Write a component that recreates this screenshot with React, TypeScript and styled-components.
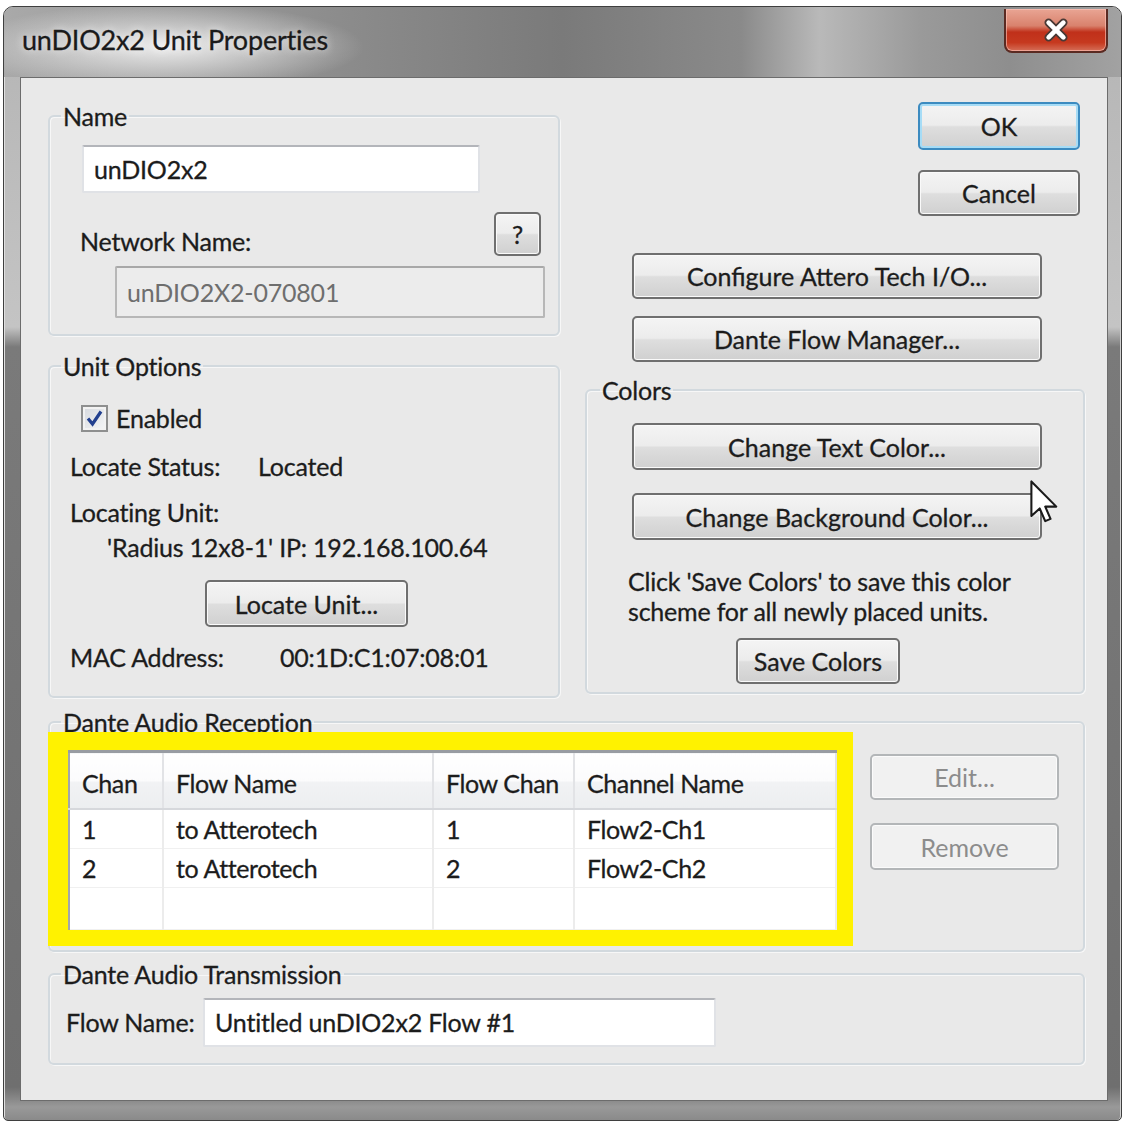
import React from 'react';
import styled, { createGlobalStyle } from 'styled-components';

const GlobalStyle = createGlobalStyle`
  html, body {
    margin: 0;
    padding: 0;
    background: #ffffff;
  }
  body {
    font-family: Lato, 'Open Sans', sans-serif;
    color: #1c1c1c;
    -webkit-text-stroke: 0.3px currentColor;
  }
`;

const Page = styled.div`
  padding: 6px 4px 6px 3px;
`;

const Window = styled.div`
  position: relative;
  width: 1119px;
  box-sizing: border-box;
  border: 1px solid #3f3f3f;
  border-radius: 10px 10px 5px 5px;
  padding-bottom: 19px;
  background: linear-gradient(
    180deg,
    #b4b4b4 0px,
    #c4c4c4 320px,
    #7a7a7a 340px,
    #6f6f6f 1080px,
    #999999 1100px,
    #8a8a8a 100%
  );
  box-shadow: inset 1px 1px 0 #e0e0e0, inset -1px 0 0 #d0d0d0;
  overflow: hidden;
`;

const TitleBar = styled.div`
  height: 70px;
  display: flex;
  align-items: center;
  justify-content: space-between;
  padding-left: 18px;
  background:
    radial-gradient(ellipse 200px 44px at 160px 40px, rgba(240, 240, 240, 0.95), rgba(240, 240, 240, 0) 100%),
    linear-gradient(
      90deg,
      #a9a9a9 0%,
      #8c8c8c 30%,
      #7a7a7a 50%,
      #8a8a8a 66%,
      #b9b9b9 73%,
      #9a9a9a 82%,
      #8e8e8e 90%,
      #a2a2a2 100%
    );
`;

const Title = styled.div`
  font-size: 27px;
  letter-spacing: -0.2px;
  color: #1a1a1a;
  margin-top: -6px;
  text-shadow: 0 0 8px rgba(255, 255, 255, 0.9);
`;

const CloseButton = styled.div`
  align-self: flex-start;
  width: 104px;
  height: 44px;
  margin: 2px 13px 0 0;
  display: flex;
  align-items: center;
  justify-content: center;
  box-sizing: border-box;
  border: 2px solid #5a2a22;
  border-top: none;
  border-radius: 0 0 8px 8px;
  background: linear-gradient(180deg, #e9a594 0%, #d9826d 40%, #c0301a 55%, #c6391f 80%, #d56f58 100%);
  box-shadow: inset 0 0 0 1px rgba(255, 200, 190, 0.6);
`;

const Client = styled.div`
  margin: 0 13px 0 16px;
  border: 1px solid #6c6c6c;
  background: #e9e9e9;
  padding: 24px 22px 35px 27px;
  position: relative;
`;

const TopSection = styled.div`
  display: flex;
  gap: 25px;
  align-items: flex-start;
`;

const Column = styled.div<{ $w: number }>`
  width: ${(p) => p.$w}px;
  display: flex;
  flex-direction: column;
`;

const Group = styled.fieldset<{ $pb: number; $mt?: number }>`
  margin: ${(p) => p.$mt ?? 0}px 0 0 0;
  padding: 0 0 ${(p) => p.$pb}px 0;
  border: 2px solid #d2d9de;
  border-radius: 6px;
  box-shadow: inset 1px 1px 0 #f7f7f7, 1px 1px 0 #f7f7f7;
  min-width: 0;
  display: flex;
  flex-direction: column;
  align-items: flex-start;
`;

const Legend = styled.legend<{ $ml?: number }>`
  margin-left: ${(p) => p.$ml ?? 11}px;
  padding: 0 2px;
  font-size: 25px;
  line-height: 28px;
  letter-spacing: -0.2px;
  color: #1c1c1c;
`;

const Text = styled.div<{ $ml?: number; $mt?: number; $w?: number }>`
  margin: ${(p) => p.$mt ?? 0}px 0 0 ${(p) => p.$ml ?? 0}px;
  font-size: 25px;
  line-height: 28px;
  letter-spacing: -0.2px;
  white-space: nowrap;
  color: #1c1c1c;
  ${(p) => (p.$w ? `width: ${p.$w}px;` : '')}
`;

const Row = styled.div<{ $ml?: number; $mt?: number }>`
  display: flex;
  align-items: center;
  margin: ${(p) => p.$mt ?? 0}px 0 0 ${(p) => p.$ml ?? 0}px;
`;

const Button = styled.button<{
  $w: number;
  $h?: number;
  $ml?: number;
  $mt?: number;
  $variant?: 'default' | 'disabled';
}>`
  width: ${(p) => p.$w}px;
  height: ${(p) => p.$h ?? 46}px;
  margin: ${(p) => p.$mt ?? 0}px 0 0 ${(p) => p.$ml ?? 0}px;
  padding: 0;
  flex-shrink: 0;
  box-sizing: border-box;
  border-radius: 5px;
  font-family: inherit;
  font-size: 25px;
  letter-spacing: 0px;
  -webkit-text-stroke: ${(p) => (p.$variant === 'disabled' ? '0px' : '0.3px')} currentColor;
  color: ${(p) => (p.$variant === 'disabled' ? '#8c8c8c' : '#1c1c1c')};
  border: 2px solid
    ${(p) => (p.$variant === 'default' ? '#3c8bc0' : p.$variant === 'disabled' ? '#b3b6b8' : '#6f6f6f')};
  background: ${(p) =>
    p.$variant === 'disabled'
      ? '#f1f1f1'
      : 'linear-gradient(180deg, #f4f4f4 0%, #ececec 48%, #dedede 52%, #d0d0d0 100%)'};
  box-shadow: ${(p) =>
    p.$variant === 'default'
      ? 'inset 0 0 0 2px #a6dcf6'
      : p.$variant === 'disabled'
      ? 'inset 0 0 0 1px #fbfbfb'
      : 'inset 0 0 0 1px #fafafa'};
`;

const TextBox = styled.input<{ $w: number; $h: number; $ml?: number; $mt?: number; $disabled?: boolean }>`
  width: ${(p) => p.$w}px;
  height: ${(p) => p.$h}px;
  margin: ${(p) => p.$mt ?? 0}px 0 0 ${(p) => p.$ml ?? 0}px;
  box-sizing: border-box;
  padding: 0 0 0 10px;
  font-family: inherit;
  font-size: 25px;
  letter-spacing: -0.2px;
  outline: none;
  -webkit-text-stroke: ${(p) => (p.$disabled ? '0px' : '0.3px')} currentColor;
  color: ${(p) => (p.$disabled ? '#6e6e6e' : '#1c1c1c')};
  background: ${(p) => (p.$disabled ? '#ececec' : '#ffffff')};
  border: 2px solid ${(p) => (p.$disabled ? '#b7b7b7' : '#e0e2e6')};
  border-top-color: ${(p) => (p.$disabled ? '#a8a8a8' : '#b3b5ba')};
  border-radius: 2px;
`;

const CheckBox = styled.div`
  width: 27px;
  height: 27px;
  box-sizing: border-box;
  border: 2px solid #8e8f8f;
  background: linear-gradient(135deg, #d6d9de 0%, #f5f6f7 100%);
  box-shadow: inset 0 0 0 2px #f2f2f2;
  display: flex;
  align-items: center;
  justify-content: center;
  margin-right: 8px;
`;

const ButtonStack = styled.div<{ $mt: number; $gap: number; $ml: number }>`
  display: flex;
  flex-direction: column;
  gap: ${(p) => p.$gap}px;
  margin: ${(p) => p.$mt}px 0 0 ${(p) => p.$ml}px;
`;

const ReceptionBody = styled.div`
  display: flex;
  align-items: flex-start;
  margin: -4px 0 0 -2px;
`;

const Highlight = styled.div`
  border-style: solid;
  border-color: #fff200;
  border-width: 18px 16px 16px 20px;
`;

const ListView = styled.table`
  width: 767px;
  border-collapse: collapse;
  table-layout: fixed;
  background: #ffffff;
  border-top: 3px solid #989ca2;
  border-left: 2px solid #a2a6ab;
`;

const HeadCell = styled.th<{ $w: number }>`
  width: ${(p) => p.$w}px;
  height: 57px;
  padding: 5px 0 0 12px;
  text-align: left;
  font-weight: normal;
  font-size: 25px;
  letter-spacing: -0.4px;
  color: #1c1c1c;
  background: linear-gradient(180deg, #ffffff 0%, #fbfbfc 50%, #f1f2f4 52%, #eceef0 100%);
  border-right: 2px solid #e2e3e6;
  border-bottom: 2px solid #d6d8dc;
  white-space: nowrap;
  box-sizing: border-box;
`;

const Cell = styled.td<{ $h?: number }>`
  height: ${(p) => p.$h ?? 38}px;
  padding: 0 0 0 12px;
  font-size: 25px;
  letter-spacing: -0.4px;
  border-right: 2px solid #ececec;
  border-bottom: 1px solid #f0f0f0;
  white-space: nowrap;
`;

const Cursor = styled.svg`
  position: absolute;
  left: 1009px;
  top: 402px;
`;

const columns = [
  { title: 'Chan', w: 94 },
  { title: 'Flow Name', w: 270 },
  { title: 'Flow Chan', w: 141 },
  { title: 'Channel Name', w: 262 },
];

const rows = [
  ['1', 'to Atterotech', '1', 'Flow2-Ch1'],
  ['2', 'to Atterotech', '2', 'Flow2-Ch2'],
  ['', '', '', ''],
];

const App = () => {
  return (
    <Page>
      <GlobalStyle />
      <Window>
        <TitleBar>
          <Title>unDIO2x2 Unit Properties</Title>
          <CloseButton>
            <svg width="28" height="24" viewBox="0 0 30 26">
              <path d="M7 5 L23 21 M23 5 L7 21" stroke="#4a3a36" strokeWidth="9" strokeLinecap="round" />
              <path d="M7 5 L23 21 M23 5 L7 21" stroke="#ffffff" strokeWidth="5" strokeLinecap="round" />
            </svg>
          </CloseButton>
        </TitleBar>
        <Client>
          <TopSection>
            <Column $w={512}>
              <Group $pb={16}>
                <Legend>Name</Legend>
                <TextBox $w={398} $h={48} $ml={32} $mt={15} readOnly value="unDIO2x2" />
                <Row $mt={19} $ml={30}>
                  <Text $w={414} $mt={14}>Network Name:</Text>
                  <Button $w={47} $h={44}>?</Button>
                </Row>
                <TextBox $w={430} $h={52} $ml={65} $mt={10} $disabled readOnly value="unDIO2X2-070801" />
              </Group>
              <Group $pb={25} $mt={16}>
                <Legend>Unit Options</Legend>
                <Row $ml={31} $mt={24}>
                  <CheckBox>
                    <svg width="19" height="19" viewBox="0 0 19 19">
                      <path d="M3 9.5 L7.5 15 L16 2.5" stroke="#22408f" strokeWidth="3.2" fill="none" />
                    </svg>
                  </CheckBox>
                  <Text>Enabled</Text>
                </Row>
                <Row $ml={20} $mt={20}>
                  <Text $w={188}>Locate Status:</Text>
                  <Text>Located</Text>
                </Row>
                <Text $ml={20} $mt={18}>Locating Unit:</Text>
                <Text $ml={57} $mt={7}>'Radius 12x8-1' IP: 192.168.100.64</Text>
                <Button $w={203} $h={47} $ml={155} $mt={19}>Locate Unit...</Button>
                <Row $ml={20} $mt={16}>
                  <Text $w={210}>MAC Address:</Text>
                  <Text>00:1D:C1:07:08:01</Text>
                </Row>
              </Group>
            </Column>
            <Column $w={500}>
              <ButtonStack $mt={0} $gap={20} $ml={333}>
                <Button $w={162} $h={48} $variant="default">OK</Button>
                <Button $w={162} $h={46}>Cancel</Button>
              </ButtonStack>
              <ButtonStack $mt={37} $gap={17} $ml={47}>
                <Button $w={410} $h={46}>Configure Attero Tech I/O...</Button>
                <Button $w={410} $h={46}>Dante Flow Manager...</Button>
              </ButtonStack>
              <Group $pb={8} $mt={14}>
                <Legend $ml={13}>Colors</Legend>
                <Button $w={410} $h={47} $ml={45} $mt={19}>Change Text Color...</Button>
                <Button $w={410} $h={47} $ml={45} $mt={23}>Change Background Color...</Button>
                <Text $ml={41} $mt={27}>Click 'Save Colors' to save this color</Text>
                <Text $ml={41} $mt={2}>scheme for all newly placed units.</Text>
                <Button $w={164} $h={46} $ml={149} $mt={13}>Save Colors</Button>
              </Group>
            </Column>
          </TopSection>
          <Group $pb={4} $mt={10}>
            <Legend>Dante Audio Reception</Legend>
            <ReceptionBody>
              <Highlight>
                <ListView>
                  <thead>
                    <tr>
                      {columns.map((c) => (
                        <HeadCell key={c.title} $w={c.w}>
                          {c.title}
                        </HeadCell>
                      ))}
                    </tr>
                  </thead>
                  <tbody>
                    {rows.map((r, i) => (
                      <tr key={i}>
                        {r.map((v, j) => (
                          <Cell key={j} $h={i === 2 ? 41 : 38}>
                            {v}
                          </Cell>
                        ))}
                      </tr>
                    ))}
                  </tbody>
                </ListView>
              </Highlight>
              <ButtonStack $mt={22} $gap={23} $ml={17}>
                <Button $w={189} $h={46} $variant="disabled">Edit...</Button>
                <Button $w={189} $h={47} $variant="disabled">Remove</Button>
              </ButtonStack>
            </ReceptionBody>
          </Group>
          <Group $pb={16} $mt={8}>
            <Legend>Dante Audio Transmission</Legend>
            <Row $ml={16} $mt={10}>
              <Text $w={137}>Flow Name:</Text>
              <TextBox $w={513} $h={49} readOnly value="Untitled unDIO2x2 Flow #1" />
            </Row>
          </Group>
          <Cursor width="30" height="44" viewBox="0 0 13 19">
            <path
              d="M0.6 0.6 V15.6 L4.2 12.3 L6.6 17.8 L8.9 16.8 L6.6 11.5 H11.4 Z"
              fill="#ffffff"
              stroke="#1a1a1a"
              strokeWidth="0.9"
              strokeLinejoin="round"
            />
          </Cursor>
        </Client>
      </Window>
    </Page>
  );
};

export default App;
